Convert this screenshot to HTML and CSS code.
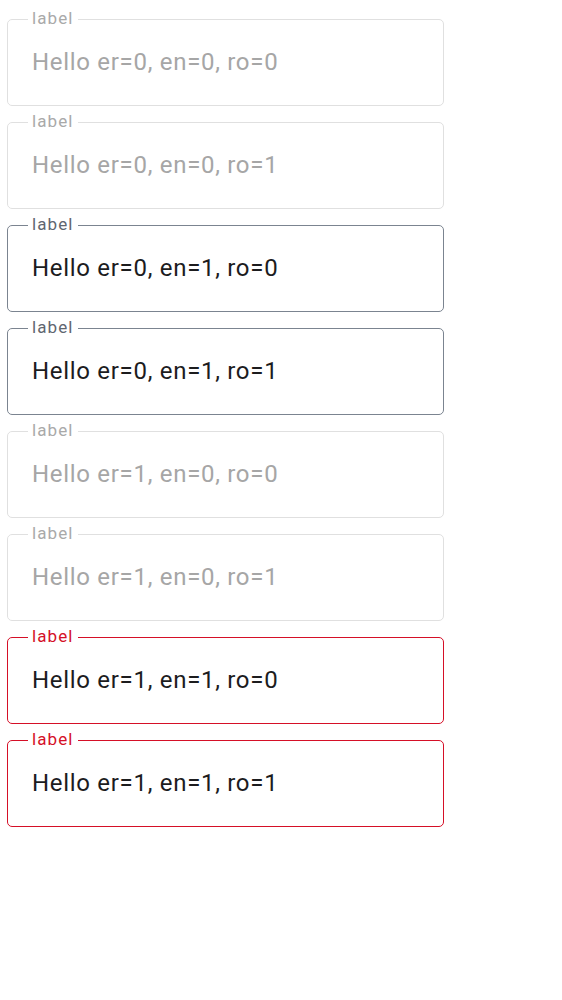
FILE: index.html
```html
<!DOCTYPE html>
<html>
<head>
<meta charset="utf-8">
<link rel="stylesheet" href="styles.css">
</head>
<body>
<div class="list">
  <fieldset class="field disabled"><legend>label</legend><div class="value">Hello er=0, en=0, ro=0</div></fieldset>
  <fieldset class="field disabled"><legend>label</legend><div class="value">Hello er=0, en=0, ro=1</div></fieldset>
  <fieldset class="field enabled"><legend>label</legend><div class="value">Hello er=0, en=1, ro=0</div></fieldset>
  <fieldset class="field enabled"><legend>label</legend><div class="value">Hello er=0, en=1, ro=1</div></fieldset>
  <fieldset class="field disabled"><legend>label</legend><div class="value">Hello er=1, en=0, ro=0</div></fieldset>
  <fieldset class="field disabled"><legend>label</legend><div class="value">Hello er=1, en=0, ro=1</div></fieldset>
  <fieldset class="field error"><legend>label</legend><div class="value">Hello er=1, en=1, ro=0</div></fieldset>
  <fieldset class="field error"><legend>label</legend><div class="value">Hello er=1, en=1, ro=1</div></fieldset>
</div>
</body>
</html>
```
FILE: styles.css
```css
html, body {
  margin: 0;
  padding: 0;
  background: #ffffff;
}
body {
  font-family: Roboto, "Noto Sans", sans-serif;
}
.list {
  display: flex;
  flex-direction: column;
  gap: 6px;
  padding: 9px 0 0 7px;
  width: 437px;
}
.field {
  margin: 0;
  padding: 0 0 0 20px;
  height: 97px;
  box-sizing: border-box;
  border: 1px solid #e0e0e0;
  border-radius: 5px;
  min-width: 0;
}
.field legend {
  margin-left: 0;
  padding: 0 4px 2px 4px;
  font-size: 17px;
  line-height: 18px;
  letter-spacing: 1.1px;
  color: #a9a9a9;
}
.value {
  font-size: 24px;
  line-height: 28px;
  padding-top: 19px;
  padding-left: 4px;
  letter-spacing: 0.7px;
  color: #a6a6a6;
}
.enabled {
  border-color: #7b8490;
}
.enabled legend {
  color: #5f6670;
}
.enabled .value {
  color: #1c1c1e;
}
.error {
  border-color: #d50f27;
}
.error legend {
  color: #d50f27;
}
.error .value {
  color: #1c1c1e;
}
```
